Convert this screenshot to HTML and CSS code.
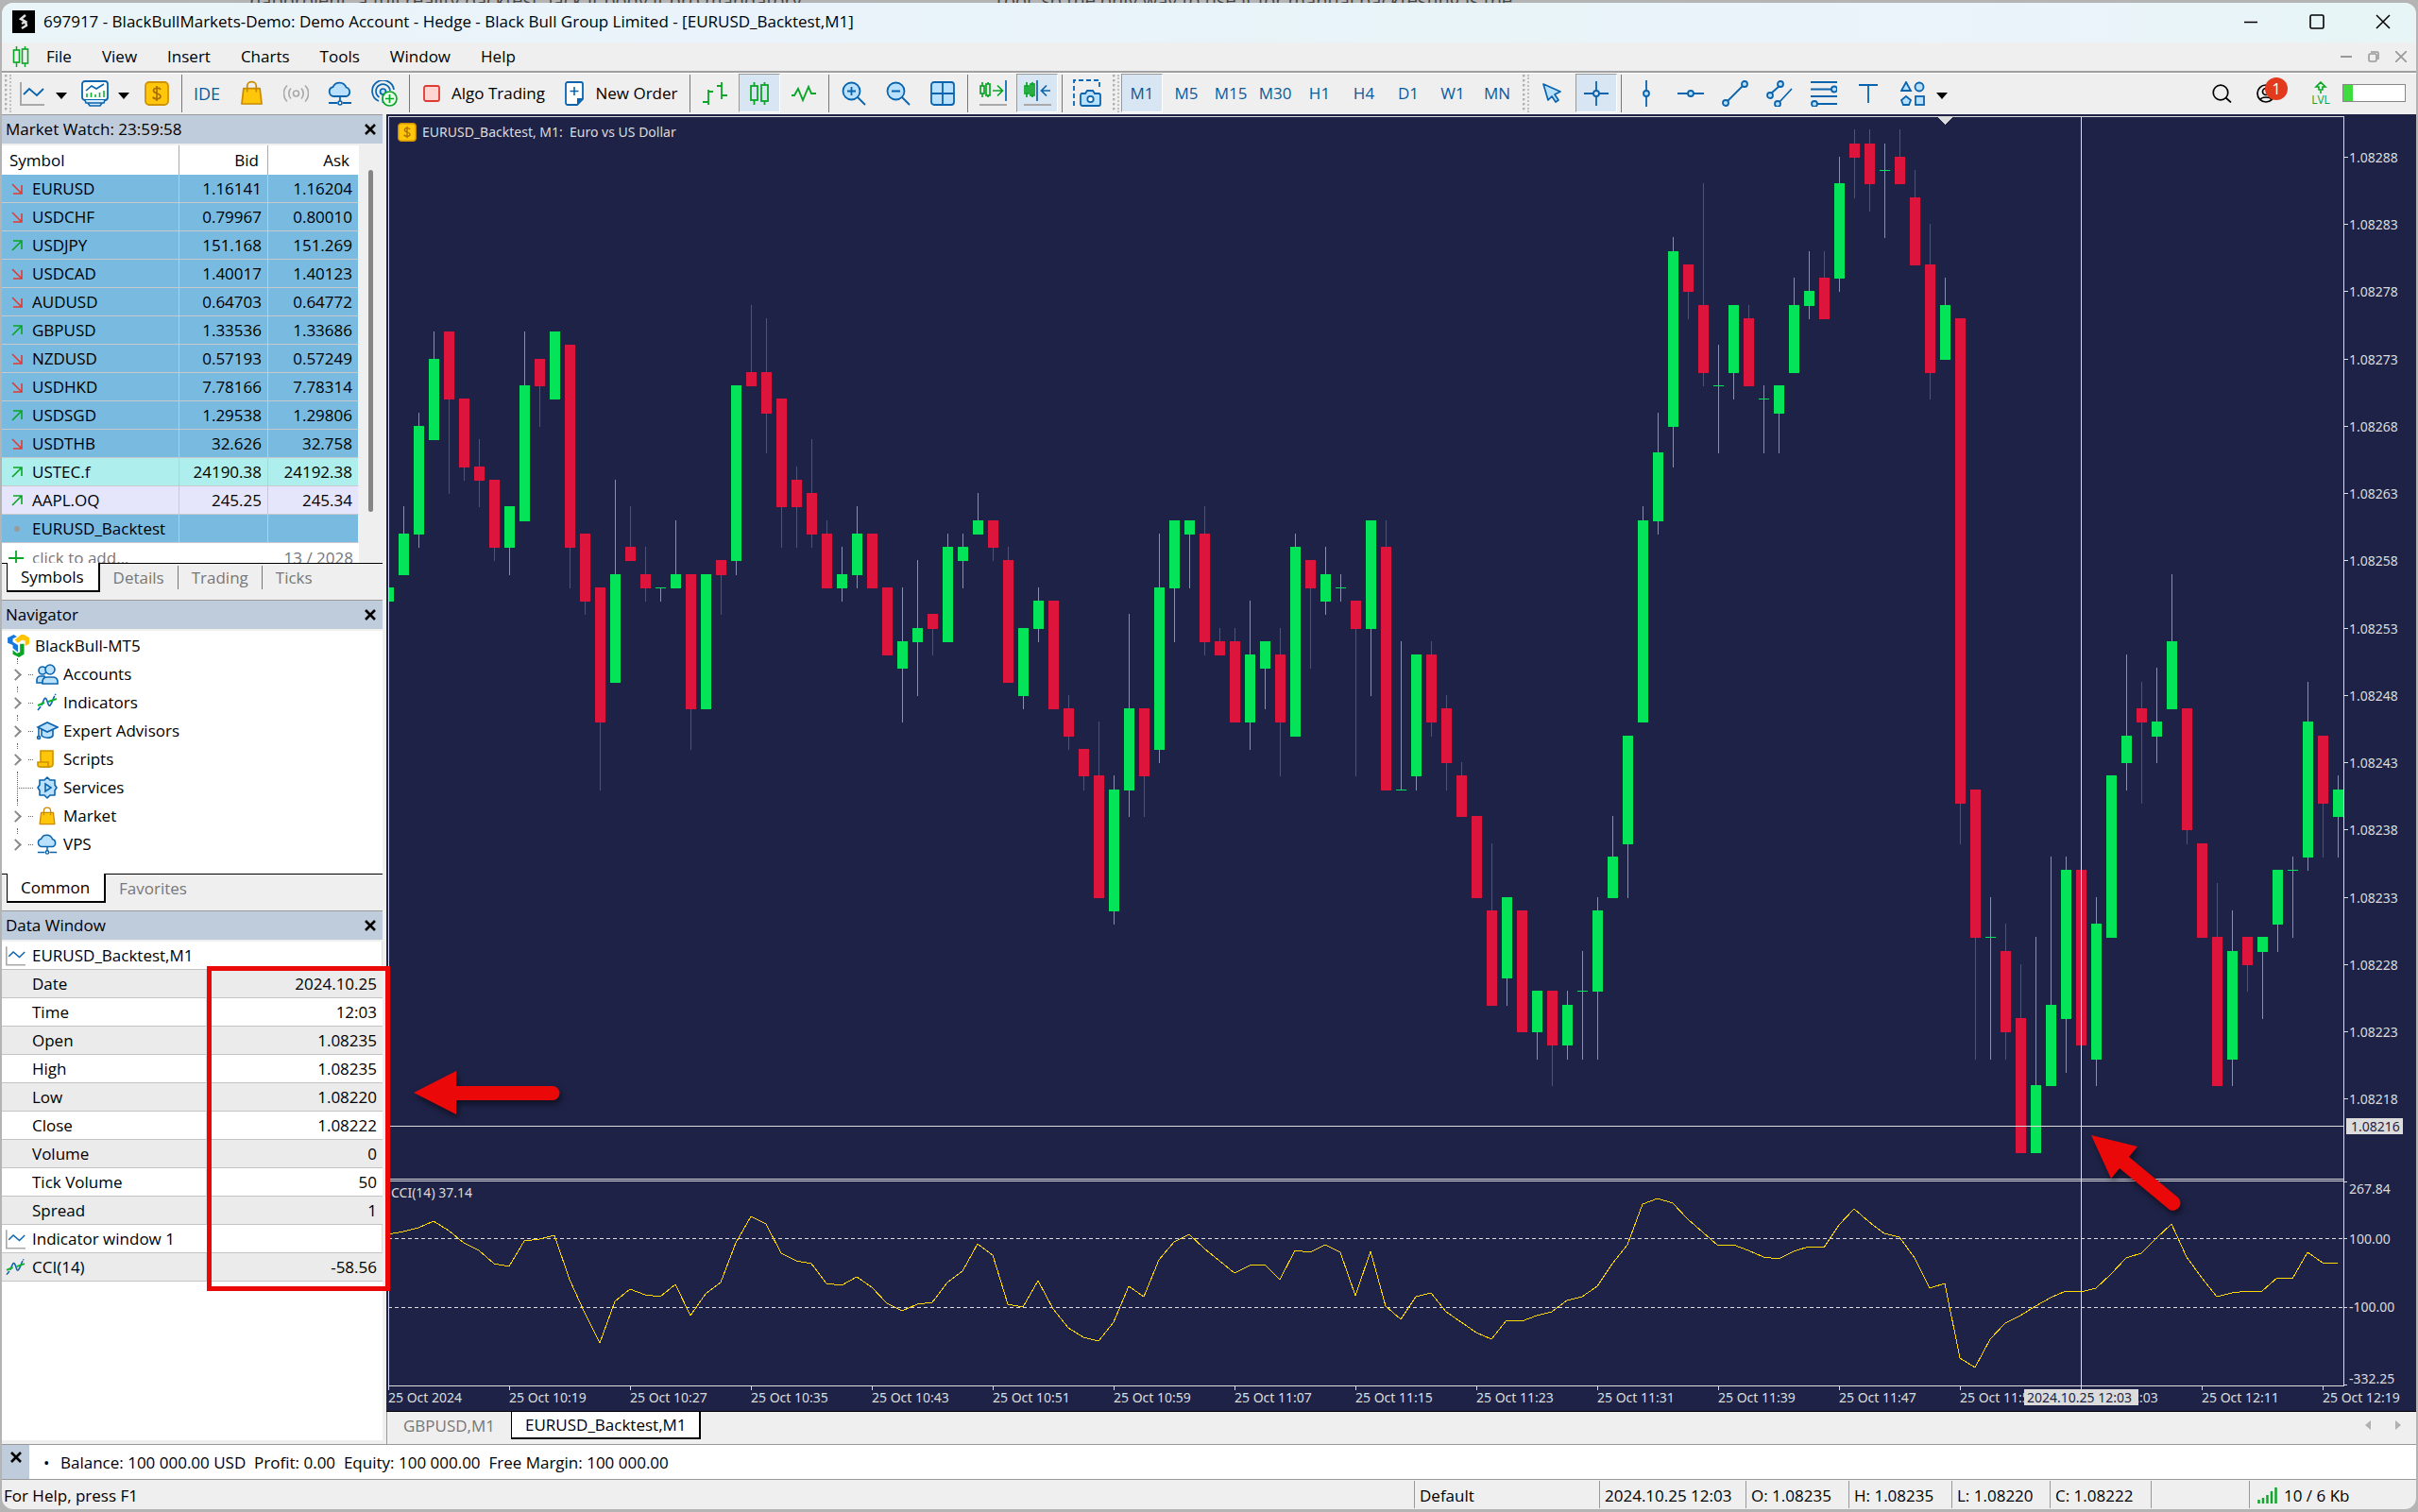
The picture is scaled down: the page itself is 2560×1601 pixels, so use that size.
FILE: index.html
```html
<!DOCTYPE html>
<html lang="en">
<head>
<meta charset="utf-8">
<title>697917 - BlackBullMarkets-Demo</title>
<link rel="stylesheet" href="styles.css">
</head>
<body>
<svg class="defs" width="0" height="0" aria-hidden="true">
  <symbol id="i-close" viewBox="0 0 14 14"><path d="M2 2L12 12M12 2L2 12" fill="none" stroke="#000" stroke-width="2.6"/></symbol>
  <symbol id="i-down" viewBox="0 0 12 12"><path d="M1 1L11 11M11 2V11H2" fill="none" stroke="#e03a35" stroke-width="1.6"/></symbol>
  <symbol id="i-up" viewBox="0 0 12 12"><path d="M1 11L11 1M2 1H11V10" fill="none" stroke="#0aa526" stroke-width="1.6"/></symbol>
  <symbol id="i-chart" viewBox="0 0 26 26"><path d="M1 1V25H26" fill="none" stroke="#a9a9a9" stroke-width="2"/><path d="M4 14L10 8L18 15L25 8" fill="none" stroke="#0a64ad" stroke-width="1.8"/></symbol>
  <symbol id="i-bag" viewBox="0 0 24 28"><path d="M3 9H21L23 26H1Z" fill="#ffc60a" stroke="#c98a00" stroke-width="1.8" stroke-linejoin="round"/><path d="M7 13V6a5 4.500 0 0 1 10 0V13" fill="none" stroke="#c98a00" stroke-width="1.8"/></symbol>
  <symbol id="i-cloud" viewBox="0 0 28 26"><path d="M7 16a5 5 0 0 1-.5-9.800A7.500 7.500 0 0 1 20.500 6.500A5 5 0 0 1 21 16Z" fill="#b9e1fd" stroke="#0a64ad" stroke-width="1.800"/><path d="M14 16V22M2 23H11M17 23H26" stroke="#0a64ad" stroke-width="1.800" fill="none"/><circle cx="14" cy="23" r="2" fill="#fff" stroke="#0a64ad" stroke-width="1.600"/></symbol>
  <symbol id="i-ind" viewBox="0 0 22 20"><path d="M1 18L5 13C8 6 8 4 10 6C12 10 12 14 14 13C17 9 17 5 20 1" fill="none" stroke="#0a64ad" stroke-width="1.600" stroke-dasharray="5 1.500 30 1"/><path d="M1 13L8 10M12 9L21 6" stroke="#10b32c" stroke-width="2" fill="none"/></symbol>
  <symbol id="i-dollar" viewBox="0 0 26 26"><rect x="1" y="1" width="24" height="24" rx="4" fill="#ffc60a" stroke="#cf9200" stroke-width="1.800"/><path d="M17 9C16 6.500 9.500 6.500 9.500 10C9.500 13.500 17 12.500 17 16C17 19.500 9.500 19.500 9 16.500M13 5V21" fill="none" stroke="#a86f00" stroke-width="1.700"/></symbol>
</svg>

<div class="backdrop" aria-hidden="true"><span class="backdrop-a">happroient: a full reality backtest, lack it body it pro mandatory</span><span>Tool, so the only way to use it for manual backtesting is the</span></div>
<div class="window">
  <header class="titlebar">
    <svg class="applogo" viewBox="0 0 24 24"><rect width="24" height="24" fill="#000"/><path d="M14 5L9 9L14 12L10 14M14 12L15 16L10 19" stroke="#e0e0e0" stroke-width="2.500" fill="none"/></svg>
    <h1>697917 - BlackBullMarkets-Demo: Demo Account - Hedge - Black Bull Group Limited - [EURUSD_Backtest,M1]</h1>
    <div class="winbtns">
      <button aria-label="Minimize"><svg width="16" height="16"><path d="M1 8.500H15" stroke="#000" stroke-width="1.500"/></svg></button>
      <button aria-label="Maximize"><svg width="16" height="16"><rect x="1" y="1" width="14" height="14" rx="1.500" fill="none" stroke="#000" stroke-width="1.600"/></svg></button>
      <button aria-label="Close"><svg width="16" height="16"><path d="M1 1L15 15M15 1L1 15" stroke="#000" stroke-width="1.500"/></svg></button>
    </div>
  </header>

  <nav class="menubar">
    <svg class="menu-logo" width="18" height="22"><path d="M4.500 0V22M13.500 0V22" stroke="#0aa526" stroke-width="1.500"/><rect x="1.500" y="4" width="6" height="13" fill="#efefef" stroke="#0aa526" stroke-width="1.600"/><rect x="10.500" y="3" width="6" height="15" fill="#efefef" stroke="#0aa526" stroke-width="1.600"/></svg>
    <button>File</button><button>View</button><button>Insert</button><button>Charts</button><button>Tools</button><button>Window</button><button>Help</button>
    <div class="mdibtns">
      <button aria-label="Minimize chart"><svg width="12" height="12"><path d="M0 6H12" stroke="#999" stroke-width="2"/></svg></button>
      <button aria-label="Restore chart"><svg width="12" height="12"><rect x="1" y="3" width="8" height="8" rx="1.500" fill="none" stroke="#999" stroke-width="1.600"/><path d="M3 1H9.500A1.500 1.500 0 0 1 11 2.500V9" fill="none" stroke="#999" stroke-width="1.600"/></svg></button>
      <button aria-label="Close chart"><svg width="12" height="12"><path d="M0 0L12 12M12 0L0 12" stroke="#999" stroke-width="1.700"/></svg></button>
    </div>
  </nav>

  <div class="toolbar">
    <i class="grip"></i>
    <button class="tb" aria-label="Charts"><svg width="26" height="26"><use href="#i-chart"/></svg></button><button class="drop" aria-label="Chart list"></button>
    <button class="tb" aria-label="Profiles"><svg width="29" height="28"><rect x="1" y="1" width="27" height="20" rx="3" fill="#fff" stroke="#0a64ad" stroke-width="1.800"/><path d="M5 11L11 6L16 9L24 4" fill="none" stroke="#0a64ad" stroke-width="1.600"/><path d="M6 18V14M10.500 18V13M15 18V15M19.500 18V13M24 18V11" stroke="#10b32c" stroke-width="1.600"/><path d="M4 21L5 24H24L25 21M7 24L9 27H20L22 24" fill="#dceeff" stroke="#0a64ad" stroke-width="1.600"/></svg></button><button class="drop" aria-label="Profile list"></button>
    <button class="tb" aria-label="Trade"><svg width="26" height="26"><use href="#i-dollar"/></svg></button>
    <i class="sep"></i>
    <button class="tb ide">IDE</button>
    <button class="tb" aria-label="Market"><svg width="23" height="27"><use href="#i-bag"/></svg></button>
    <button class="tb" aria-label="Signals"><svg width="27" height="20" fill="none" stroke="#a9a9a9" stroke-width="1.700"><circle cx="13.500" cy="10" r="3"/><path d="M8 4.500a8 8 0 0 0 0 11M19 4.500a8 8 0 0 1 0 11M4 1.500a12 12 0 0 0 0 17M23 1.500a12 12 0 0 1 0 17"/></svg></button>
    <button class="tb" aria-label="VPS"><svg width="28" height="26"><use href="#i-cloud"/></svg></button>
    <button class="tb" aria-label="Community"><svg width="28" height="28" fill="none" stroke="#0a64ad" stroke-width="1.700"><path d="M24 10A11.500 11.500 0 1 0 8 22"/><path d="M20 11A7.500 7.500 0 1 0 8.500 18"/><circle cx="12.500" cy="12" r="3" fill="#b9e1fd"/><path d="M12.500 14V24"/><circle cx="19.500" cy="19.500" r="7.500" fill="#e6ffe9" stroke="#0aa526"/><path d="M19.500 15V24M15 19.500H24" stroke="#0aa526"/></svg></button>
    <i class="sep"></i>
    <button class="tb wide-a"><svg width="18" height="18"><rect x="1" y="1" width="16" height="16" rx="2" fill="#ffd5d2" stroke="#e03a35" stroke-width="1.800"/></svg><span>Algo Trading</span></button>
    <button class="tb wide-b"><svg width="20" height="26"><path d="M3 1H17a2 2 0 0 1 2 2V19L13 25H3a2 2 0 0 1-2-2V3a2 2 0 0 1 2-2Z" fill="#fff" stroke="#0a64ad" stroke-width="1.800"/><path d="M19 18H13V25Z" fill="#0a64ad"/><path d="M10 6V15M5.500 10.500H14.500" stroke="#0a64ad" stroke-width="1.600"/></svg><span>New Order</span></button>
    <i class="sep"></i>
    <button class="tb" aria-label="Bars"><svg width="26" height="26" fill="none" stroke="#0aa526" stroke-width="1.800"><path d="M6 9V25M6 11H11M0 22H6M20 1V19M15 5H20M20 15H26"/></svg></button>
    <button class="tb on" aria-label="Candles"><svg width="20" height="24" fill="none" stroke="#0aa526" stroke-width="1.800"><path d="M4.500 0V4M4.500 19V24M15.500 0V3M15.500 20V24"/><rect x="1" y="4" width="7" height="15"/><rect x="12" y="3" width="7" height="17"/></svg></button>
    <button class="tb" aria-label="Line"><svg width="26" height="20" fill="none" stroke="#0aa526" stroke-width="1.900"><path d="M0 12H3L7 5L12 17L18 3L21 10H26"/></svg></button>
    <i class="sep"></i>
    <button class="tb" aria-label="Zoom in"><svg width="26" height="26" fill="none" stroke="#0a64ad" stroke-width="1.800"><circle cx="10.500" cy="10.500" r="9" fill="#b9e1fd"/><path d="M17 17L25 25M10.500 6V15M6 10.500H15"/></svg></button>
    <button class="tb" aria-label="Zoom out"><svg width="26" height="26" fill="none" stroke="#0a64ad" stroke-width="1.800"><circle cx="10.500" cy="10.500" r="9" fill="#b9e1fd"/><path d="M17 17L25 25M6 10.500H15"/></svg></button>
    <button class="tb" aria-label="Tile windows"><svg width="26" height="26" fill="#b9e1fd" stroke="#0a64ad" stroke-width="1.800"><rect x="1" y="1" width="24" height="24" rx="3"/><path d="M13 1V25M1 13H25"/></svg></button>
    <i class="sep"></i>
    <button class="tb" aria-label="Auto scroll"><svg width="29" height="27" fill="none" stroke="#0aa526" stroke-width="1.700"><path d="M3 2V18M9 2V18"/><rect x="1" y="6" width="4" height="8" fill="#efefef"/><rect x="7" y="4" width="4" height="12" fill="#efefef"/><path d="M14 11H24M19 5.500L24.500 11L19 16.500"/><path d="M28 0V22" stroke="#0a64ad"/><path d="M0 26H29" stroke="#a9a9a9" stroke-width="2"/></svg></button>
    <button class="tb on" aria-label="Chart shift"><svg width="29" height="27" fill="none" stroke="#0aa526" stroke-width="1.700"><path d="M3 2V18M9 2V18"/><rect x="1" y="6" width="4" height="8"/><rect x="7" y="4" width="4" height="12"/><path d="M14 0V22M18 11H28M24 5.500L18.500 11L24 16.500" stroke="#0a64ad"/><path d="M0 26H29" stroke="#a9a9a9" stroke-width="2"/></svg></button>
    <i class="sep"></i>
    <button class="tb" aria-label="Screenshot"><svg width="30" height="29" fill="none" stroke="#0a64ad" stroke-width="1.800"><path d="M1 28V1H28V10" stroke-dasharray="5 3"/><path d="M9 15h4l2-3h6l2 3h4a2 2 0 0 1 2 2v9a2 2 0 0 1-2 2H10a2 2 0 0 1-2-2v-9a2 2 0 0 1 1-2Z" fill="#b9e1fd"/><circle cx="18.500" cy="21" r="3.200" fill="#fff"/></svg></button>
    <i class="grip"></i>
    <button class="tb tf on">M1</button><button class="tb tf">M5</button><button class="tb tf">M15</button><button class="tb tf">M30</button><button class="tb tf">H1</button><button class="tb tf">H4</button><button class="tb tf">D1</button><button class="tb tf">W1</button><button class="tb tf">MN</button>
    <i class="grip"></i>
    <button class="tb" aria-label="Cursor"><svg width="20" height="21"><path d="M1 1L19 9L13 12L17 18L14 20L10 14L6 18Z" fill="#b9e1fd" stroke="#0a64ad" stroke-width="1.700" stroke-linejoin="round"/></svg></button>
    <button class="tb on" aria-label="Crosshair"><svg width="26" height="26" fill="none" stroke="#0a64ad" stroke-width="1.800"><path d="M13 0V10M13 16V26M0 13H10M16 13H26"/><circle cx="13" cy="13" r="3"/></svg></button>
    <i class="sep"></i>
    <button class="tb" aria-label="Vertical line"><svg width="28" height="28" fill="none" stroke="#0a64ad" stroke-width="1.800"><path d="M14 0V11M14 17V28"/><circle cx="14" cy="14" r="3" fill="#b9e1fd"/></svg></button>
    <button class="tb" aria-label="Horizontal line"><svg width="28" height="28" fill="none" stroke="#0a64ad" stroke-width="1.800"><path d="M0 14H11M17 14H28"/><circle cx="14" cy="14" r="3" fill="#b9e1fd"/></svg></button>
    <button class="tb" aria-label="Trend line"><svg width="28" height="28" fill="#b9e1fd" stroke="#0a64ad" stroke-width="1.800"><path d="M6 22L22 6"/><circle cx="4" cy="24" r="3"/><circle cx="24" cy="4" r="3"/></svg></button>
    <button class="tb" aria-label="Channel"><svg width="28" height="28" fill="#b9e1fd" stroke="#0a64ad" stroke-width="1.800"><path d="M5 14L14 6M14 23L27 9"/><circle cx="4" cy="16" r="3"/><circle cx="15" cy="4" r="3"/><circle cx="12" cy="25" r="3"/></svg></button>
    <button class="tb" aria-label="Fibonacci"><svg width="28" height="28" fill="#b9e1fd" stroke="#0a64ad" stroke-width="1.800"><path d="M0 2H28M0 9.500H22M0 17H28M7 25H28"/><circle cx="25" cy="9.500" r="3"/><circle cx="4" cy="25" r="3"/></svg></button>
    <button class="tb" aria-label="Text"><svg width="20" height="20"><path d="M0 1H20M10 1V20" stroke="#0a64ad" stroke-width="1.800"/></svg></button>
    <button class="tb" aria-label="Objects"><svg width="26" height="26" fill="#b9e1fd" stroke="#0a64ad" stroke-width="1.800"><path d="M6 1L11 10H1Z"/><circle cx="20" cy="6" r="4.500"/><path d="M6 16L11 20L9 25H3L1 20Z"/><rect x="16" y="16" width="9" height="9"/></svg></button><button class="drop" aria-label="Object list"></button>
    <div class="tools-right">
      <button class="tb" aria-label="Search"><svg width="21" height="20" fill="none" stroke="#000" stroke-width="1.700"><circle cx="9" cy="9" r="7.800"/><path d="M14.500 14.500L20 19.500"/></svg></button>
      <button class="tb user" aria-label="Account"><svg width="20" height="20" fill="none" stroke="#000" stroke-width="1.700"><circle cx="10" cy="10" r="9"/><circle cx="10" cy="8" r="3.500"/><path d="M4 17C5 13 15 13 16 17"/></svg><span class="badge">1</span></button>
      <div class="lvl"><svg width="14" height="14" fill="#d9ffdf" stroke="#0aa526" stroke-width="1.600"><path d="M7 1L12 6H9V9H5V6H2ZM7 10V13"/></svg><span>LVL</span></div>
      <div class="meter"><i></i></div>
    </div>
  </div>

  <main class="workspace">
    <aside class="side">
      <section class="panel">
        <header class="phead"><h2>Market Watch: 23:59:58</h2><button aria-label="Close Market Watch"><svg width="14" height="14"><use href="#i-close"/></svg></button></header>
        <div class="mw">
          <table class="quotes">
            <thead><tr><th>Symbol</th><th>Bid</th><th>Ask</th></tr></thead>
            <tbody>
              <tr><td><svg><use href="#i-down"/></svg>EURUSD</td><td>1.16141</td><td>1.16204</td></tr>
              <tr><td><svg><use href="#i-down"/></svg>USDCHF</td><td>0.79967</td><td>0.80010</td></tr>
              <tr><td><svg><use href="#i-up"/></svg>USDJPY</td><td>151.168</td><td>151.269</td></tr>
              <tr><td><svg><use href="#i-down"/></svg>USDCAD</td><td>1.40017</td><td>1.40123</td></tr>
              <tr><td><svg><use href="#i-down"/></svg>AUDUSD</td><td>0.64703</td><td>0.64772</td></tr>
              <tr><td><svg><use href="#i-up"/></svg>GBPUSD</td><td>1.33536</td><td>1.33686</td></tr>
              <tr><td><svg><use href="#i-down"/></svg>NZDUSD</td><td>0.57193</td><td>0.57249</td></tr>
              <tr><td><svg><use href="#i-down"/></svg>USDHKD</td><td>7.78166</td><td>7.78314</td></tr>
              <tr><td><svg><use href="#i-up"/></svg>USDSGD</td><td>1.29538</td><td>1.29806</td></tr>
              <tr><td><svg><use href="#i-down"/></svg>USDTHB</td><td>32.626</td><td>32.758</td></tr>
              <tr class="aqua"><td><svg><use href="#i-up"/></svg>USTEC.f</td><td>24190.38</td><td>24192.38</td></tr>
              <tr class="lilac"><td><svg><use href="#i-up"/></svg>AAPL.OQ</td><td>245.25</td><td>245.34</td></tr>
              <tr><td><svg viewBox="0 0 12 12"><circle cx="6" cy="6" r="3" fill="#999"/></svg>EURUSD_Backtest</td><td></td><td></td></tr>
              <tr class="add"><td><svg viewBox="0 0 16 16"><path d="M8 0V16M0 8H16" stroke="#0aa526" stroke-width="1.800"/></svg>click to add...</td><td colspan="2">13 / 2028</td></tr>
            </tbody>
          </table>
          <div class="track"><i></i></div>
        </div>
        <div class="tabs"><button class="sel">Symbols</button><button>Details</button><button>Trading</button><button>Ticks</button></div>
      </section>

      <section class="panel">
        <header class="phead"><h2>Navigator</h2><button aria-label="Close Navigator"><svg width="14" height="14"><use href="#i-close"/></svg></button></header>
        <ul class="tree">
          <li class="root"><svg width="24" height="24" viewBox="0 0 22 22"><path d="M1 3L7 0L10 2L6 4V7L11 10V17L6 13V10L1 8Z" fill="#1677dd"/><path d="M8 5L14 0H17L22 3V9L18 11V6L15 5L11 8Z" fill="#ffc400"/><path d="M13 9H17V19L12 22L6 19V15L10 18L13 17Z" fill="#0aa526"/></svg>BlackBull-MT5</li>
          <li><b></b><i></i><svg width="24" height="22" fill="#b9e1fd" stroke="#0a64ad" stroke-width="1.600"><circle cx="7" cy="7" r="4"/><path d="M1 20V17a4 4 0 0 1 4-4h4V20Z"/><circle cx="15" cy="6" r="5"/><path d="M7 21V18a5 5 0 0 1 5-4h6a5 5 0 0 1 5 4V21Z"/></svg>Accounts</li>
          <li><b></b><i></i><svg width="24" height="20"><use href="#i-ind"/></svg>Indicators</li>
          <li><b></b><i></i><svg width="24" height="20" fill="#b9e1fd" stroke="#0a64ad" stroke-width="1.600"><path d="M6 8V15C9 18 16 18 18 15V8"/><path d="M2 6L12 1L23 6L12 11ZM3 6V15"/><circle cx="3" cy="17" r="1.500"/></svg>Expert Advisors</li>
          <li><b></b><i></i><svg width="24" height="20" fill="#ffc60a" stroke="#cf9200" stroke-width="1.600"><path d="M5 1H18V15a3 3 0 0 1-3 3H5Z"/><path d="M2 13H13V16a2 2 0 0 0 2 2H4a2 2 0 0 1-2-2Z"/></svg>Scripts</li>
          <li class="leaf"><b></b><i></i><svg width="24" height="24" fill="#b9e1fd" stroke="#0a64ad" stroke-width="1.600"><path d="M9 4L12 1L15 4L20 4L20 9L22 12L20 15V20L15 20L12 23L9 20L4 20V15L2 12L4 9V4Z" stroke-linejoin="round"/><path d="M10 8V16L16 12Z"/></svg>Services</li>
          <li><b></b><i></i><svg width="24" height="20"><use href="#i-bag"/></svg>Market</li>
          <li><b></b><i></i><svg width="24" height="22"><use href="#i-cloud"/></svg>VPS</li>
        </ul>
        <div class="tabs"><button class="sel">Common</button><button>Favorites</button></div>
      </section>

      <section class="panel grow">
        <header class="phead"><h2>Data Window</h2><button aria-label="Close Data Window"><svg width="14" height="14"><use href="#i-close"/></svg></button></header>
        <div class="dw">
          <table class="data">
            <colgroup><col class="name"><col></colgroup>
            <tr class="cap"><th colspan="2"><svg><use href="#i-chart"/></svg>EURUSD_Backtest,M1</th></tr>
            <tr><th>Date</th><td>2024.10.25</td></tr>
            <tr><th>Time</th><td>12:03</td></tr>
            <tr><th>Open</th><td>1.08235</td></tr>
            <tr><th>High</th><td>1.08235</td></tr>
            <tr><th>Low</th><td>1.08220</td></tr>
            <tr><th>Close</th><td>1.08222</td></tr>
            <tr><th>Volume</th><td>0</td></tr>
            <tr><th>Tick Volume</th><td>50</td></tr>
            <tr><th>Spread</th><td>1</td></tr>
            <tr class="cap"><th colspan="2"><svg><use href="#i-chart"/></svg>Indicator window 1</th></tr>
            <tr class="cap"><th><svg><use href="#i-ind"/></svg>CCI(14)</th><td>-58.56</td></tr>
          </table>
          <div class="callout"></div>
          <svg class="arrow-left" width="170" height="60"><path d="M8 27L53 4V20H155a7 7 0 0 1 0 15H53V50Z" fill="#ea0808"/></svg>
        </div>
      </section>
    </aside>

    <section class="charts">
      <div class="chart" id="chart">
        <div class="chart-title"><svg width="20" height="20"><use href="#i-dollar"/></svg>EURUSD_Backtest, M1:&nbsp; Euro vs US Dollar</div>
      </div>
      <div class="chart-tabs"><button>GBPUSD,M1</button><button class="sel">EURUSD_Backtest,M1</button>
        <svg class="tabnav" width="38" height="10"><path d="M6 0V10L0 5ZM32 0V10L38 5Z" fill="#b0b0b0"/></svg></div>
    </section>
  </main>

  <div class="toolbox">
    <div class="tclose"><button aria-label="Close Toolbox"><svg width="14" height="14"><use href="#i-close"/></svg></button></div>
    <p><span class="dot">•</span>Balance: 100 000.00 USD&nbsp; Profit: 0.00&nbsp; Equity: 100 000.00&nbsp; Free Margin: 100 000.00</p>
  </div>

  <footer class="status">
    <span class="help">For Help, press F1</span><span class="w196">Default</span><span class="w155">2024.10.25 12:03</span><span class="w109">O: 1.08235</span><span class="w109">H: 1.08235</span><span class="w104">L: 1.08220</span><span class="w107">C: 1.08222</span><span class="w104"></span>
    <span class="net"><svg width="22" height="18"><path d="M1.500 18V14M6 18V12M10.500 18V9M15 18V5M19.500 18V1" stroke="#10a82c" stroke-width="2.500"/></svg>10 / 6 Kb</span>
  </footer>
</div>
<script src="chart.js"></script>
</body>
</html>
```
FILE: styles.css
```css
* { box-sizing: border-box; }
body {
  margin: 0;
  height: 100vh;
  display: flex;
  flex-direction: column;
  padding: 0 2px 3px;
  background: #b4b4b4;
  font-family: "Open Sans", "Noto Sans", sans-serif;
  font-size: 17px;
  line-height: 24px;
  color: #000;
  overflow: hidden;
}
button { font: inherit; color: inherit; background: none; border: 0; padding: 0; margin: 0; display: flex; align-items: center; justify-content: center; }
h1, h2, p, ul { margin: 0; padding: 0; font-size: inherit; font-weight: 400; list-style: none; }
svg { flex: none; }
.defs { position: absolute; }

.backdrop { height: 3px; flex: none; overflow: hidden; display: flex; padding-left: 262px; line-height: 1px; color: #444; font-size: 20px; white-space: nowrap; }
.backdrop-a { width: 788px; flex: none; }
.window { flex: 1; min-height: 0; display: flex; flex-direction: column; background: #efefef; border-radius: 12px; overflow: hidden; }

.titlebar { height: 42px; flex: none; display: flex; align-items: center; gap: 9px; padding: 0 0 3px 11px; background: linear-gradient(90deg, #e9f5f8, #eaf3fb 30%, #e8f4f8 60%, #ebf3fb 80%, #e7f5f6); }
.applogo { width: 24px; height: 24px; }
.winbtns { margin-left: auto; display: flex; }
.winbtns button { width: 70px; height: 38px; }

.menubar { height: 32px; flex: none; display: flex; align-items: center; padding-left: 11px; border-bottom: 2px solid #a0a0a0; }
.menu-logo { margin-right: 2px; }
.menubar > button { padding: 0 16px; }
.mdibtns { margin-left: auto; display: flex; padding-right: 2px; }
.mdibtns button { width: 29px; height: 28px; }

.toolbar { height: 44px; flex: none; display: flex; align-items: center; padding-bottom: 2px; border-top: 1px solid #fff; color: #0a5a9c; }
.grip { width: 10px; height: 40px; flex: none; background: radial-gradient(circle at 1px 1px, #b0b0b0 1px, transparent 2px) 3px 0 / 4px 5px repeat-y; border-right: 2px dotted #c0c0c0; }
.grip + .tb { margin-left: 2px; }
.grip:first-child + .tb { margin-left: 0; }
.sep { width: 6px; height: 40px; flex: none; background: linear-gradient(#777, #777) 2px 0 / 1px 100% no-repeat; }
.tb { width: 44px; height: 41px; margin: 0 2px 0 1px; flex: none; border: 1px solid transparent; }
.tb.on { background: #d8e5f2; border-color: #999 #fff #fff #999; }
.tb.ide { font-size: 18px; }
.tb.tf { font-size: 17px; }
.wide-a, .wide-b { color: #000; gap: 12px; }
.wide-a { width: 149px; }
.wide-b { width: 136px; }
.drop { width: 19px; height: 40px; flex: none; }
.drop::before { content: ""; border: 6px solid transparent; border-top: 7px solid #000; border-bottom: 0; margin-top: 6px; margin-right: 6px; }
.tools-right { margin-left: auto; display: flex; align-items: center; padding-right: 11px; }
.user { position: relative; }
.badge { position: absolute; left: 20px; top: 3px; width: 24px; height: 24px; border-radius: 12px; background: #e23a1c; color: #fff; font-size: 16px; line-height: 24px; text-align: center; }
.lvl { width: 34px; margin: 0 6px 0 17px; display: flex; flex-direction: column; align-items: center; font-size: 12px; line-height: 12px; color: #0aa526; }
.meter { width: 67px; height: 19px; border: 1px solid #888; background: #fff; }
.meter i { display: block; width: 10px; height: 17px; background: #3edc3e; }

.workspace { flex: 1; min-height: 0; display: flex; gap: 4px; }
.side { width: 403px; flex: none; display: flex; flex-direction: column; }
.panel { flex: none; margin-bottom: 8px; }
.panel.grow { flex: 1; display: flex; flex-direction: column; margin-bottom: 4px; }
.phead { height: 31px; flex: none; margin-bottom: 2px; display: flex; align-items: center; justify-content: space-between; padding: 0 4px; background: #bfccdb; border-top: 1px solid #999; }
.phead button { width: 18px; height: 24px; }

.mw { height: 443px; display: flex; overflow: hidden; border-bottom: 1px solid #000; }
table { border-spacing: 0; table-layout: fixed; }
th { font-weight: 400; text-align: left; }
.quotes { width: 378px; flex: none; }
.quotes th, .quotes td { height: 30px; padding: 1px 6px 0 10px; border-bottom: 1px solid #c8c8cd; border-right: 1px solid #c8c8cd; line-height: 28px; text-align: right; white-space: nowrap; }
.quotes th { height: 31px; padding: 1px 9px 0 8px; background: #fff; border-bottom: 0; border-color: #aaa; }
.quotes tr > :first-child { width: 188px; text-align: left; }
.quotes tr > :nth-child(2) { width: 94px; }
.quotes tr > :last-child { border-right-color: transparent; }
.quotes td { background: #79bae0; background-clip: padding-box; }
.quotes .aqua td { background-color: #aeeeed; }
.quotes .lilac td { background-color: #e5e6fb; }
.quotes .add td { background: #fff; color: #777; border: 0; }
.quotes svg { width: 12px; height: 12px; margin-right: 10px; }
.quotes .add td:first-child { padding-left: 7px; }
.quotes .add svg { width: 16px; height: 16px; margin-right: 9px; vertical-align: -2px; }
.track { flex: 1; padding: 26px 10px 0; }
.track i { display: block; width: 5px; height: 362px; border-radius: 3px; background: #858585; }

.tabs { display: flex; height: 30px; padding-left: 5px; color: #777; }
.tabs button { padding: 0 14px; height: 25px; margin: 2px 0 3px; border-right: 1px solid #777; }
.tabs button:last-child { border-right-color: transparent; }
.tabs .sel { color: #000; margin: -1px 0 0; height: 31px; padding: 1px 15px 0 14px; background: #fff; border: solid #000; border-width: 0 2px 2px 1px; }

.tree { height: 258px; background: #fff; border-bottom: 1px solid #000; padding-top: 1px; }
.tree li { height: 30px; display: flex; align-items: center; padding-left: 12px; position: relative; }
.tree li svg { width: 24px; margin-right: 5px; }
.tree .root { padding-left: 5px; }
.tree .root svg { margin-right: 6px; }
.tree li b { width: 9px; height: 9px; border: solid #888; border-width: 2px 2px 0 0; transform: rotate(45deg); margin-left: -2px; }
.tree li i { width: 5px; margin: 0 3px 0 9px; border-top: 1px dotted #666; }
.tree li + li::before { content: ""; position: absolute; left: 16px; top: -2px; height: 6px; border-left: 1px dotted #666; }
.tree .leaf b { visibility: hidden; }
.tree .leaf i { width: 15px; margin-left: -1px; }
.tree li.leaf::before { height: 34px; }

.dw { flex: 1; background: #fff; position: relative; }
.data { width: 100%; }
.data .name { width: 217px; }
.data th, .data td { height: 30px; line-height: 28px; border-bottom: 1px solid #c4c4c4; padding: 1px 6px 0 32px; }
.data th { border-right: 1px solid #ddd; }
.data td { text-align: right; }
.data tr:nth-child(even) > * { background: #ebebeb; }
.data .cap th { padding-left: 4px; }
.data svg { width: 21px; height: 22px; margin-right: 7px; vertical-align: -5px; }
.callout { position: absolute; z-index: 2; left: 217px; top: 26px; width: 194px; height: 344px; border: 5px solid #ea0808; }
.arrow-left { position: absolute; z-index: 2; left: 428px; top: 133px; filter: drop-shadow(2px 4px 3px rgba(0, 0, 0, .5)); }

.charts { flex: 1; min-width: 0; display: flex; flex-direction: column; }
.chart { flex: 1; min-height: 0; position: relative; overflow: hidden; background: #1e2246; border-bottom: 1px solid #000; }
.chart > svg { position: absolute; left: 0; top: 0; }
.chart text, .chart-title { font: 14px "Noto Sans", "Open Sans", sans-serif; }
.chart text { fill: #dcdcdc; }
.chart text.inv { fill: #1e2246; }
.chart .ptr { filter: drop-shadow(2px 4px 3px rgba(0, 0, 0, .5)); }
.chart-title { position: absolute; z-index: 1; left: 12px; top: 9px; display: flex; align-items: center; gap: 6px; color: #dcdcdc; line-height: 20px; }
.chart-tabs { height: 34px; flex: none; display: flex; align-items: flex-start; color: #777; border-left: 1px solid #999; }
.chart-tabs button { height: 29px; padding: 0 17px; }
.chart-tabs .sel { color: #000; background: #fff; padding: 1px 13px 0 14px; border: solid #000; border-width: 0 2px 2px 1px; }
.tabnav { margin: 9px 16px 0 auto; }

.toolbox { height: 38px; flex: none; display: flex; background: #fff; border-top: 1px solid #999; border-bottom: 1px solid #999; }
.toolbox p { display: flex; align-items: center; padding-top: 2px; }
.tclose { width: 29px; display: flex; justify-content: center; align-items: flex-start; padding-top: 6px; background: #bfccdb; }
.dot { width: 18px; margin-left: 15px; }

.status { height: 31px; flex: none; display: flex; align-items: center; }
.status span { height: 29px; flex: none; padding: 1px 0 0 5px; border-left: 1px solid #999; line-height: 29px; }
.status .help { flex: 1; padding-left: 2px; border: 0; }
.w196 { width: 196px; }
.w155 { width: 155px; }
.w109 { width: 109px; }
.w104 { width: 104px; }
.w107 { width: 107px; }
.status .net { width: 177px; padding-left: 8px; display: flex; align-items: center; gap: 6px; }
```
FILE: chart.js
```js
// One-minute candles from 10:11: [colour, body top, body bottom, high, low], in points above 1.08000.
const candles = `G256,255,256,255 G260,257,262,257 G268,260,269,259 G273,267,275,267 R275,270,275,263 R270,265,270,264 R265,264,267,262 R264,259,264,258
G262,259,262,257 G271,261,275,261 R273,271,273,268 G275,270,275,270 R274,259,274,256 R260,255,260,254 R256,246,256,241 G257,249,264,249
R259,258,262,258 R257,256,259,255 G256,256,256,255 G257,256,261,256 R257,247,257,244 G257,247,257,247 R258,257,258,254 G271,258,271,257
R272,271,277,271 R272,269,276,266 R270,262,270,259 R264,262,265,259 R263,260,267,259 R260,256,261,256 G257,256,259,255 G260,257,262,256
R260,256,260,256 R256,251,256,251 G252,250,256,246 G253,252,258,248 R254,253,254,251 G259,252,260,252 G259,258,260,256 G261,260,263,260
R261,259,261,258 R258,249,259,249 G253,248,253,247 G255,253,256,252 R255,247,255,247 R247,245,248,244 R244,242,244,241 R242,233,246,233
G241,232,242,231 G247,241,254,239 R247,242,247,239 G256,244,260,243 G261,256,261,252 G261,260,261,256 R260,252,262,251 R252,251,253,251
R252,246,253,246 G251,246,255,244 G252,250,252,247 R251,246,253,242 G259,245,260,245 R258,256,258,250 G257,255,259,254 G256,256,257,255
R255,253,255,242 G261,253,261,248 R259,241,261,241 G241,241,252,241 G251,242,251,241 R251,246,252,245 R247,243,248,241 R242,239,243,239
R239,233,239,233 R232,225,237,225 G233,227,233,225 R232,223,232,223 G226,223,226,221 R226,222,226,219 G225,222,226,221 G226,226,229,221
G232,226,233,221 G236,233,239,233 G245,237,245,233 G261,246,262,246 G266,261,269,260 G281,268,282,265 R280,278,280,276 R277,272,286,271
G271,271,274,266 G277,272,277,270 R276,271,277,271 G270,270,271,266 G271,269,271,266 G277,272,279,272 G278,277,281,276 R279,276,281,276
G286,279,288,278 R289,288,290,285 R289,286,290,284 G287,287,289,282 R288,286,290,286 R285,280,287,280 R280,272,283,270 G277,273,279,273
R276,240,276,237 R241,230,241,221 G230,230,233,221 R229,223,231,221 R224,214,228,214 G219,214,230,214 G225,219,236,219 G235,224,236,220
R235,222,235,220 G231,221,233,219 G242,230,242,230 G245,243,251,241 R247,246,249,240 G246,245,250,243 G252,247,257,247 R247,238,247,237
R237,230,237,230 R230,219,234,219 G229,221,232,219 R230,228,230,226 G230,229,230,224 G235,231,235,229 G235,235,236,230 G246,236,249,235
R245,240,245,236 G241,239,242,236`.split(/\s+/).map(s => [s[0], ...s.slice(1).split(",").map(Number)]);

// CCI(14), as thirds of a pixel below the top of its pane.
const cci = [231,223,209,190,219,257,283,325,334,251,247,233,376,479,575,445,404,424,428,391,490,421,385,259,175,198,290,315,325,387,394,365,398,451,474,452,447,384,348,262,298,454,463,379,468,527,558,571,509,397,430,313,256,232,277,315,354,331,327,374,281,289,265,288,425,284,460,502,428,418,477,510,543,563,505,508,488,478,442,429,395,323,264,136,118,133,183,226,268,265,283,304,310,284,271,274,200,151,191,229,239,306,403,388,625,655,563,512,490,459,431,412,415,403,356,306,290,243,198,303,368,430,416,412,412,370,373,289,322,322];

const host = document.getElementById("chart");
const W = host.clientWidth, H = host.clientHeight;
const right = W - 77, base = H - 27, split = base - 219, top0 = 2;
const X = i => 2 + 16 * i;
const Y = p => Math.round(top0 + (291 - p) * (split - top0) / 78.93);
const cciY = v => Math.round(split - 18 + v / 3);
const line = "#dcdcdc";
const out = [];
const rect = (x, y, w, h, c) => out.push(`<rect x="${x}" y="${y}" width="${w}" height="${h}" fill="${c}"/>`);
const text = (x, y, s, k = "") => out.push(`<text x="${x}" y="${y}" class="${k}">${s}</text>`);

out.push(`<clipPath id="plot"><rect x="2" y="2" width="${right - 2}" height="${base - 2}"/></clipPath><g clip-path="url(#plot)">`);
candles.forEach(([k, t, b, h, l], i) => {
  const c = k === "G" ? "#05e359" : "#dd143c";
  rect(X(i), Y(h), 1, Y(l) - Y(h) + 1, c);
  rect(X(i) - 5, Y(t), 11, Y(b) - Y(t) + 1, c);
});
for (const v of [244, 461]) out.push(`<path d="M2 ${cciY(v) + .5}H${right}" stroke="${line}" stroke-dasharray="4 3"/>`);
out.push(`<polyline points="${cci.map((v, i) => X(i) + "," + cciY(v)).join(" ")}" fill="none" stroke="#ffd700" stroke-width="1"/></g>`);

// Pane frames and the chart shift marker.
rect(2, 2, right - 1, 1, line);
rect(2, 2, 1, base + 2, line);
rect(2, split, right - 1, 1, line);
rect(2, split + 2, right - 1, 1, line);
rect(2, base, right - 1, 1, line);
rect(right, 2, 1, base - 1, line);
out.push(`<path d="M${X(103) - 8} 3h16l-8 8Z" fill="${line}"/>`);

for (let p = 288; p >= 218; p -= 5) {
  rect(right, Y(p), 5, 1, line);
  text(right + 6, Y(p) + 6, "1.08" + p);
}
[[64, "267.84", 88], [244, "100.00", 246], [461, "-100.00", 463], [708, "-332.25", 689]].forEach(([v, s, t]) => {
  rect(right, cciY(v), 4, 1, line);
  text(right + 6, cciY(t) + 5, s);
});
for (let i = 0; i <= 128; i += 8) {
  const m = 11 + i;
  rect(X(i), base, 1, 5, line);
  text(X(i), base + 18, i ? `25 Oct ${10 + Math.floor(m / 60)}:${String(m % 60).padStart(2, "0")}` : "25 Oct 2024");
}

text(5, split + 20, "CCI(14) 37.14");

// Crosshair with its price and time tags.
const cx = X(112), cy = Y(216);
rect(cx, 2, 1, base - 2, line);
rect(2, cy, right - 2, 1, line);
rect(right + 3, cy - 8, 60, 17, line);
text(right + 8, cy + 6, "1.08216", "inv");
rect(cx - 60, base + 4, 121, 17, line);
text(cx - 57, base + 18, "2024.10.25 12:03", "inv");
out.push(`<path class="ptr" d="M${cx + 11} ${cy + 10}L${cx + 60} ${cy + 22}L${cx + 51} ${cy + 33}L${cx + 103} ${cy + 76}A8 8 0 0 1 ${cx + 94} ${cy + 89}L${cx + 41} ${cy + 45}L${cx + 32} ${cy + 56}Z" fill="#ea0808" shape-rendering="auto"/>`);

host.insertAdjacentHTML("beforeend", `<svg width="${W}" height="${H}" shape-rendering="crispEdges">${out.join("")}</svg>`);
```
